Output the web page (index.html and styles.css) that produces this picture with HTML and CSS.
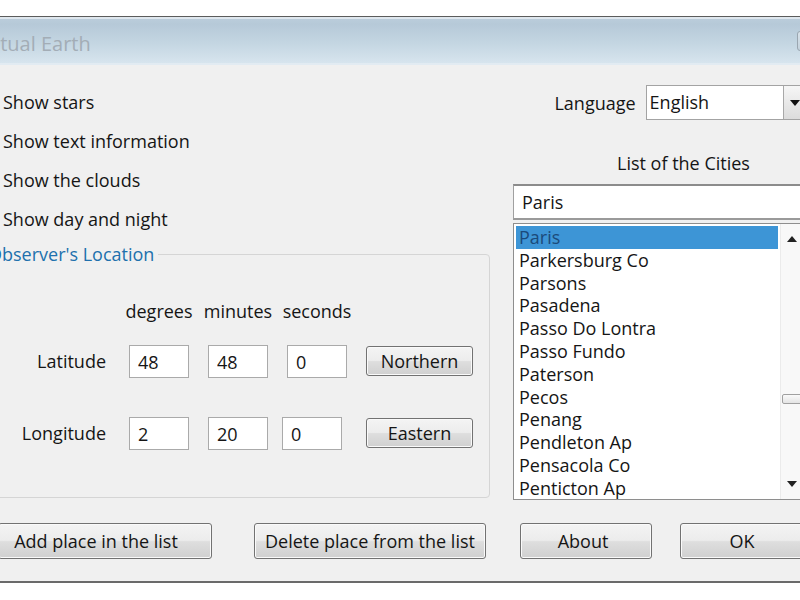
FILE: index.html
```html
<!DOCTYPE html>
<html lang="en">
<head>
<meta charset="utf-8">
<title>Virtual Earth</title>
<link rel="stylesheet" href="styles.css">
</head>
<body>
<div class="screen">
  <div class="window">
    <div class="titlebar">
      <span class="title">Virtual Earth</span>
      <span class="caption-btn"></span>
    </div>
    <div class="client">
      <div class="main">
        <div class="left">
          <div class="checks">
            <label class="check"><span class="box"></span>Show stars</label>
            <label class="check"><span class="box"></span>Show text information</label>
            <label class="check"><span class="box"></span>Show the clouds</label>
            <label class="check"><span class="box"></span>Show day and night</label>
          </div>
          <fieldset class="group">
            <legend>Observer's Location</legend>
            <div class="coords">
              <span></span>
              <span class="head">degrees</span>
              <span class="head">minutes</span>
              <span class="head">seconds</span>
              <span></span>

              <span class="coord-label">Latitude</span>
              <input class="field" type="text" value="48">
              <input class="field" type="text" value="48">
              <input class="field" type="text" value="0">
              <button class="btn btn-hemi">Northern</button>

              <span class="coord-label">Longitude</span>
              <input class="field" type="text" value="2">
              <input class="field" type="text" value="20">
              <input class="field field-shift" type="text" value="0">
              <button class="btn btn-hemi">Eastern</button>
            </div>
          </fieldset>
        </div>
        <div class="right">
          <div class="lang-row">
            <span class="lang-label">Language</span>
            <div class="combo">
              <span class="combo-text">English</span>
              <span class="combo-btn"><svg width="10" height="6" viewBox="0 0 10 6"><path d="M0 0H10L5 6Z" fill="#111"/></svg></span>
            </div>
          </div>
          <div class="cities-title">List of the Cities</div>
          <div class="city-input">Paris</div>
          <div class="listbox">
            <ul class="list">
              <li class="sel">Paris</li>
              <li>Parkersburg Co</li>
              <li>Parsons</li>
              <li>Pasadena</li>
              <li>Passo Do Lontra</li>
              <li>Passo Fundo</li>
              <li>Paterson</li>
              <li>Pecos</li>
              <li>Penang</li>
              <li>Pendleton Ap</li>
              <li>Pensacola Co</li>
              <li>Penticton Ap</li>
            </ul>
            <div class="scrollbar">
              <span class="sb-btn"><svg width="10" height="6" viewBox="0 0 10 6"><path d="M0 6H10L5 0Z" fill="#222"/></svg></span>
              <span class="sb-track"><span class="sb-thumb"></span></span>
              <span class="sb-btn"><svg width="10" height="6" viewBox="0 0 10 6"><path d="M0 0H10L5 6Z" fill="#222"/></svg></span>
            </div>
          </div>
        </div>
      </div>
      <div class="buttons">
        <button class="btn btn-add">Add place in the list</button>
        <button class="btn btn-del">Delete place from the list</button>
        <button class="btn btn-about">About</button>
        <button class="btn btn-ok">OK</button>
      </div>
    </div>
  </div>
</div>
</body>
</html>
```
FILE: styles.css
```css
html, body {
  margin: 0;
  padding: 0;
}

body {
  width: 800px;
  height: 600px;
  overflow: hidden;
  background: #ffffff;
  font-family: "Open Sans", "DejaVu Sans", sans-serif;
  font-size: 18px;
  color: #151515;
}

.screen {
  padding-top: 16px;
}

.window {
  width: 860px;
  margin-left: -30px;
  border-top: 1px solid #5c5c5c;
  border-bottom: 2px solid #6a6a6a;
  background: #f0f0f0;
}

.titlebar {
  height: 48px;
  display: flex;
  align-items: center;
  background: linear-gradient(#bccedc 0%, #b6c9d8 15%, #c4d6e2 55%, #d9e6ef 100%);
  box-shadow: inset 0 2px 0 #dfe7ee, inset 0 -2px 0 #e2ebf2;
}

.title {
  padding-left: 5px;
  padding-top: 4px;
  font-size: 20px;
  color: #a3adb6;
}

.caption-btn {
  margin-left: auto;
  width: 33px;
  height: 20px;
  box-sizing: border-box;
  border: 1px solid #9aa6b0;
  border-radius: 3px;
  background: linear-gradient(#d8e2ea, #c4d2dc);
}

.client {
  height: 516px;
  box-sizing: border-box;
}

.main {
  display: flex;
}

.left {
  width: 520px;
}

.checks {
  padding-top: 17px;
  padding-left: 12px;
}

.check {
  display: flex;
  align-items: center;
  height: 39px;
  gap: 8px;
}

.box {
  width: 13px;
  height: 13px;
  box-sizing: border-box;
  border: 1px solid #8e8f8f;
  background: #ffffff;
}

.group {
  margin: 4px 0 0 10px;
  padding: 0 0 0 4px;
  border: 1px solid #d5d5d5;
  border-radius: 4px;
  min-width: 0;
}

.group legend {
  padding: 0 4px 0 3px;
  line-height: 24px;
  color: #2070ad;
}

.coords {
  display: grid;
  grid-template-columns: 125px 60px 60px 60px 107px;
  grid-template-rows: 24px 55px 72px;
  column-gap: 19px;
  align-items: end;
  padding-top: 33px;
  padding-bottom: 47px;
}

.head {
  justify-self: center;
  line-height: 24px;
}

.coord-label {
  text-align: right;
  padding-right: 4px;
  line-height: 33px;
}

.field {
  width: 60px;
  height: 33px;
  box-sizing: border-box;
  margin: 0;
  padding: 0 0 0 8px;
  border: 1px solid #aaaaaa;
  background: #ffffff;
  font: inherit;
  color: #151515;
  outline: none;
}

.field-shift {
  margin-left: -5px;
}

.btn {
  margin: 0;
  padding: 0;
  box-sizing: border-box;
  border: 1px solid #727272;
  border-radius: 3px;
  background: linear-gradient(#f4f4f4 0%, #ececec 48%, #dedede 52%, #d0d0d0 100%);
  box-shadow: inset 0 0 0 1px #fafafa;
  font: inherit;
  color: #151515;
}

.btn-hemi {
  height: 30px;
  margin-bottom: 2px;
}

.right {
  width: 300px;
  margin-left: 23px;
}

.lang-row {
  display: flex;
  align-items: center;
  margin-top: 20px;
  margin-left: 34px;
  gap: 10px;
}

.lang-label {
  width: 90px;
  text-align: right;
}

.combo {
  display: flex;
  width: 170px;
  height: 35px;
  box-sizing: border-box;
  border: 1px solid #a3a3a3;
  background: #ffffff;
}

.combo-text {
  flex: 1;
  padding-left: 3px;
  line-height: 33px;
}

.combo-btn {
  width: 29px;
  display: flex;
  align-items: center;
  padding-left: 6px;
  box-sizing: border-box;
  border-left: 1px solid #a8a8a8;
  background: linear-gradient(#f6f6f6, #dcdcdc);
}

.cities-title {
  margin-top: 31px;
  padding-left: 104px;
  line-height: 24px;
}

.city-input {
  margin-top: 9px;
  height: 36px;
  box-sizing: border-box;
  border: 1px solid #a0a0a0;
  border-top: 2px solid #8c8c8c;
  border-bottom: 2px solid #9a9a9a;
  background: #ffffff;
  padding-left: 8px;
  line-height: 32px;
}

.listbox {
  display: flex;
  width: 293px;
  height: 277px;
  margin-top: 3px;
  box-sizing: border-box;
  border: 1px solid #8e8e8e;
  background: #ffffff;
}

.list {
  flex: 1;
  margin: 0;
  padding: 2px;
  list-style: none;
  overflow: hidden;
}

.list li {
  line-height: 22.8px;
  padding-left: 3px;
  white-space: nowrap;
}

.list li.sel {
  background: #3d95d6;
  color: #1b4a7a;
}

.scrollbar {
  width: 24px;
  display: flex;
  flex-direction: column;
  background: #f8f8f8;
  border-left: 1px solid #ebebeb;
}

.sb-btn {
  height: 30px;
  display: flex;
  align-items: center;
  padding-left: 6px;
}

.sb-track {
  flex: 1;
  padding-top: 140px;
}

.sb-thumb {
  display: block;
  height: 10px;
  margin-left: 1px;
  box-sizing: border-box;
  border: 1px solid #a0a0a0;
  border-radius: 2px;
  background: linear-gradient(#fafafa, #e4e4e4);
}

.buttons {
  display: flex;
  margin-top: 23px;
  padding-left: 28px;
}

.buttons .btn {
  height: 36px;
}

.btn-add {
  width: 214px;
  padding-right: 18px;
}

.btn-del {
  width: 232px;
  margin-left: 42px;
}

.btn-about {
  width: 132px;
  margin-left: 34px;
  padding-right: 6px;
}

.btn-ok {
  width: 132px;
  margin-left: 28px;
  padding-right: 8px;
}
```
